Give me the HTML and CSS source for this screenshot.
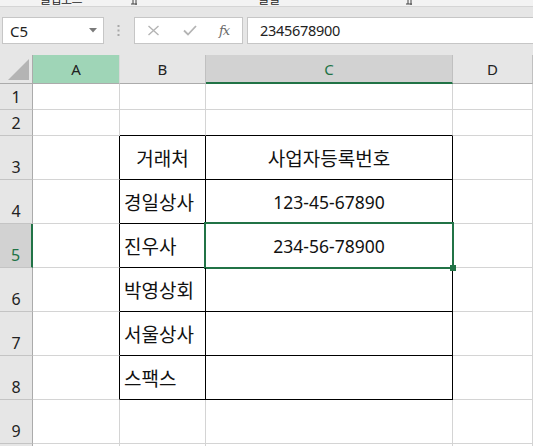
FILE: index.html
```html
<!DOCTYPE html>
<html lang="ko">
<head>
<meta charset="utf-8">
<title>Excel</title>
<link rel="stylesheet" href="styles.css">
</head>
<body>
<div class="ribbon">
  <span class="rlabel r1">클립보드</span>
  <svg class="launch l1" width="10" height="10" viewBox="0 0 10 10"><path d="M1 1H7V9M4 1V8M2 8H8" fill="none" stroke="#444" stroke-width="1"/></svg>
  <span class="rlabel r2">글꼴</span>
  <svg class="launch l2" width="10" height="10" viewBox="0 0 10 10"><path d="M1 1H7V9M4 1V8M2 8H8" fill="none" stroke="#444" stroke-width="1"/></svg>
</div>
<div class="fbar">
  <div class="namebox">
    <span class="nbtext">C5</span>
    <svg class="nbarrow" width="8" height="5" viewBox="0 0 8 5"><polygon points="0,0 8,0 4,4.5" fill="#7a7a7a"/></svg>
  </div>
  <div class="grip">
    <svg width="3" height="11" viewBox="0 0 3 11"><rect x="0.5" y="0" width="2" height="2" fill="#a8a8a8"/><rect x="0.5" y="4.5" width="2" height="2" fill="#a8a8a8"/><rect x="0.5" y="9" width="2" height="2" fill="#a8a8a8"/></svg>
  </div>
  <div class="fbox">
    <svg class="ico-x" width="13" height="11" viewBox="0 0 13 11"><path d="M1.5 1L11.5 10M11.5 1L1.5 10" stroke="#b4b4b4" stroke-width="1.4" fill="none"/></svg>
    <svg class="ico-ok" width="14" height="11" viewBox="0 0 14 11"><path d="M1 5.5L5 9.5L13 1" stroke="#b4b4b4" stroke-width="1.8" fill="none"/></svg>
    <span class="fx">fx</span>
  </div>
  <div class="finput">2345678900</div>
</div>
<div class="sheet">
  <div class="cell corner"><svg width="22" height="21" viewBox="0 0 22 21"><polygon points="21,0 21,21 0,21" fill="#b4b4b4"/></svg></div>
  <div class="cell ch chA">A</div>
  <div class="cell ch">B</div>
  <div class="cell ch chSel">C</div>
  <div class="cell ch">D</div>

  <div class="cell rh">1</div><div class="cell"></div><div class="cell"></div><div class="cell"></div><div class="cell"></div>
  <div class="cell rh">2</div><div class="cell"></div><div class="cell bt"></div><div class="cell bt"></div><div class="cell"></div>

  <div class="cell rh">3</div><div class="cell bl"></div><div class="cell tb ko center">거래처</div><div class="cell tb ko center">사업자등록번호</div><div class="cell"></div>
  <div class="cell rh">4</div><div class="cell bl"></div><div class="cell tb ko">경일상사</div><div class="cell tb center">123-45-67890</div><div class="cell"></div>
  <div class="cell rh rhSel">5</div><div class="cell bl"></div><div class="cell tb ko">진우사</div><div class="cell tb center active">234-56-78900<span class="handle"></span></div><div class="cell"></div>
  <div class="cell rh">6</div><div class="cell bl"></div><div class="cell tb ko">박영상회</div><div class="cell tb"></div><div class="cell"></div>
  <div class="cell rh">7</div><div class="cell bl"></div><div class="cell tb ko">서울상사</div><div class="cell tb"></div><div class="cell"></div>
  <div class="cell rh">8</div><div class="cell bl"></div><div class="cell tb ko">스팩스</div><div class="cell tb"></div><div class="cell"></div>
  <div class="cell rh">9</div><div class="cell"></div><div class="cell"></div><div class="cell"></div><div class="cell"></div>
  <div class="cell rh"></div><div class="cell"></div><div class="cell"></div><div class="cell"></div><div class="cell"></div>
</div>
</body>
</html>
```
FILE: styles.css
```css
html, body {
  margin: 0;
  padding: 0;
}
body {
  width: 533px;
  height: 446px;
  overflow: hidden;
  background: #e6e6e6;
  font-family: "Noto Sans", "Noto Sans CJK KR", sans-serif;
  color: #1f1f1f;
}

/* ribbon remnant */
.ribbon {
  height: 6px;
  background: #f3f3f3;
  border-bottom: 1px solid #d5d5d5;
  overflow: hidden;
  display: flex;
  align-items: flex-end;
}
.rlabel {
  font-family: "Noto Sans CJK KR", sans-serif;
  font-size: 12px;
  line-height: 14px;
  height: 14px;
  flex: none;
  color: #262626;
}
.launch { flex: none; display: block; }
.r1 { margin-left: 40px; letter-spacing: -0.5px; }
.l1 { margin-left: 47px; }
.r2 { margin-left: 119px; }
.l2 { margin-left: 124px; }

/* formula bar */
.fbar {
  height: 48px;
  box-sizing: border-box;
  padding-top: 10px;
  display: flex;
  align-items: flex-start;
}
.namebox {
  margin-left: 2px;
  width: 102px;
  height: 27px;
  box-sizing: border-box;
  border: 1px solid #c6c6c6;
  background: #fff;
  display: flex;
  align-items: center;
  padding-left: 7px;
  padding-right: 6px;
}
.nbtext {
  flex: 1;
  font-size: 15px;
  color: #222;
  line-height: 20px;
}
.nbarrow { display: block; }
.grip {
  width: 30px;
  height: 27px;
  display: flex;
  align-items: center;
  justify-content: center;
  padding-right: 1px;
  box-sizing: border-box;
}
.grip svg { display: block; }
.fbox {
  width: 109px;
  height: 27px;
  box-sizing: border-box;
  border: 1px solid #c6c6c6;
  background: #fff;
  display: flex;
  align-items: center;
  padding-left: 12px;
}
.ico-x { display: block; }
.ico-ok { display: block; margin-left: 23px; }
.fx {
  margin-left: 22px;
  font-family: "DejaVu Serif", "Liberation Serif", serif;
  font-style: italic;
  font-size: 13px;
  color: #6a6a6a;
  letter-spacing: -1px;
}
.finput {
  margin-left: 4px;
  flex: 1;
  height: 27px;
  box-sizing: border-box;
  border-top: 1px solid #c6c6c6;
  border-bottom: 1px solid #c6c6c6;
  border-left: 1px solid #c6c6c6;
  background: #fff;
  padding-left: 12px;
  font-size: 14.5px;
  letter-spacing: -0.3px;
  line-height: 25px;
  color: #222;
}

/* sheet grid */
.sheet {
  display: grid;
  grid-template-columns: 33px 87px 86px 247px 80px;
  grid-template-rows: 29px 26px 26px repeat(7, 44px) 20px;
  background: #fff;
  height: 391px;
  overflow: hidden;
}
.cell {
  box-sizing: border-box;
  border-right: 1px solid #d4d4d4;
  border-bottom: 1px solid #d4d4d4;
  display: flex;
  align-items: center;
  padding-left: 4px;
  font-size: 17.5px;
  color: #111;
  white-space: nowrap;
  position: relative;
}
.ko {
  font-family: "Noto Sans CJK KR", sans-serif;
  font-size: 19px;
  padding-left: 4px;
}
.center { justify-content: center; padding-left: 0; }

.corner {
  background: #e6e6e6;
  border-right-color: #ababab;
  border-bottom-color: #ababab;
  padding: 0;
  align-items: flex-end;
  justify-content: flex-end;
  padding-right: 2px;
  padding-bottom: 3px;
}
.corner svg { display: block; }
.ch {
  background: #e6e6e6;
  border-right-color: #c0c0c0;
  border-bottom-color: #ababab;
  justify-content: center;
  padding-left: 0;
  font-size: 15px;
  color: #222;
}
.chA { background: #9fd5b7; border-right-color: #d9d9d9; }
.chSel {
  background: #d2d2d2;
  color: #217346;
  border-bottom: 2px solid #217346;
}
.rh {
  background: #e6e6e6;
  border-right-color: #ababab;
  border-bottom-color: #c4c4c4;
  justify-content: center;
  align-items: flex-end;
  padding-left: 0;
  padding-bottom: 1px;
  font-size: 16px;
  color: #222;
}
.rhSel {
  background: #d2d2d2;
  color: #217346;
  border-right: 2px solid #217346;
}

.tb { border-right-color: #000; border-bottom-color: #000; }
.bl { border-right-color: #000; }
.bt { border-bottom-color: #000; }

.active::after {
  content: "";
  position: absolute;
  top: -2px;
  left: -2px;
  right: -2px;
  bottom: -2px;
  border: 2px solid #217346;
}
.handle {
  position: absolute;
  right: -4px;
  bottom: -4px;
  width: 6px;
  height: 6px;
  background: #217346;
  z-index: 2;
}
```
